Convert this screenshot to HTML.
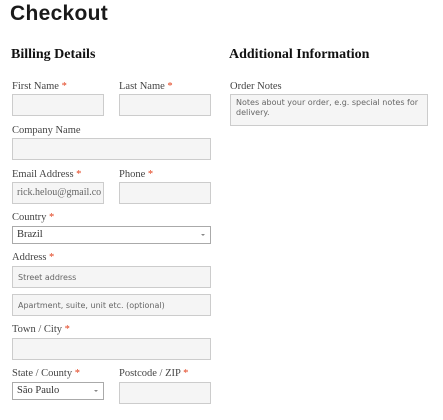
<!DOCTYPE html>
<html><head><meta charset="utf-8"><style>
*{box-sizing:border-box;margin:0;padding:0}
body{width:443px;height:420px;background:#fff;position:relative;overflow:hidden;font-family:"Liberation Serif",serif;color:#333}
h1{position:absolute;left:10px;top:2px;font-family:"Liberation Sans",sans-serif;font-weight:bold;font-size:21px;color:#1a1a1a;letter-spacing:0.3px}
h2{position:absolute;font-family:"Liberation Serif",serif;font-weight:bold;font-size:14px;color:#111}
.l{position:absolute;font-size:10.5px;color:#444;line-height:12px}
.l b{color:#e2401c;font-weight:normal}
.i{position:absolute;background:#f5f5f5;border:1px solid #ccc;height:22px;font-family:"DejaVu Sans",sans-serif;font-size:8px;color:#666;padding:6px 0 0 5px}
.s{position:absolute;background:#fff;border:1px solid #aaa;height:18px;font-size:10.5px;color:#333;padding:2px 0 0 4px}
.s:after{content:"";position:absolute;right:5px;top:7px;border:2px solid transparent;border-top:2px solid #888}
</style></head><body>
<h1>Checkout</h1>
<h2 style="left:11px;top:47px">Billing Details</h2>
<h2 style="left:229px;top:47px">Additional Information</h2>
<div class="l" style="left:12px;top:81px">First Name <b>*</b></div>
<div class="l" style="left:119px;top:81px">Last Name <b>*</b></div>
<div class="i" style="left:12px;top:94px;width:92px"></div>
<div class="i" style="left:119px;top:94px;width:92px"></div>
<div class="l" style="left:12px;top:125px">Company Name</div>
<div class="i" style="left:12px;top:138px;width:199px"></div>
<div class="l" style="left:12px;top:169px">Email Address <b>*</b></div>
<div class="l" style="left:119px;top:169px">Phone <b>*</b></div>
<div class="i" style="left:12px;top:182px;width:92px;font-family:'Liberation Serif',serif;font-size:10px;padding:4px 0 0 4px;overflow:hidden;white-space:nowrap">rick.helou@gmail.co</div>
<div class="i" style="left:119px;top:182px;width:92px"></div>
<div class="l" style="left:12px;top:212px">Country <b>*</b></div>
<div class="s" style="left:12px;top:226px;width:199px">Brazil</div>
<div class="l" style="left:12px;top:252px">Address <b>*</b></div>
<div class="i" style="left:12px;top:266px;width:199px">Street address</div>
<div class="i" style="left:12px;top:294px;width:199px">Apartment, suite, unit etc. (optional)</div>
<div class="l" style="left:12px;top:324px">Town / City <b>*</b></div>
<div class="i" style="left:12px;top:338px;width:199px"></div>
<div class="l" style="left:12px;top:368px">State / County <b>*</b></div>
<div class="l" style="left:119px;top:368px">Postcode / ZIP <b>*</b></div>
<div class="s" style="left:12px;top:382px;width:92px">São Paulo</div>
<div class="i" style="left:119px;top:382px;width:92px"></div>
<div class="l" style="left:230px;top:81px">Order Notes</div>
<div class="i" style="left:230px;top:94px;width:198px;height:32px;padding:3px 0 0 5px;line-height:10px">Notes about your order, e.g. special notes for delivery.</div>
</body></html>
